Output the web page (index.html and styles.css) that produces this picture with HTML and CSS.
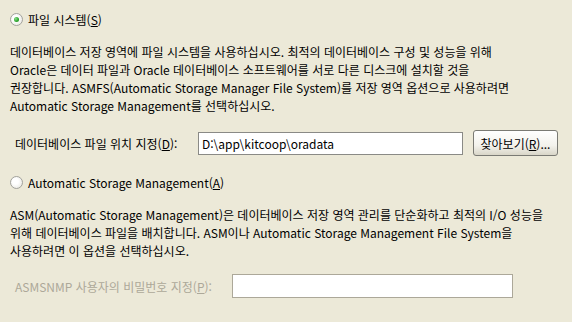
FILE: index.html
```html
<!DOCTYPE html>
<html lang="ko">
<head>
    <meta charset="UTF-8">
    <title>저장 영역 옵션</title>
    <link rel="stylesheet" href="styles.css">
</head>
<body>
    <div class="page">
        <label class="radio-row">
            <span class="radio checked"></span>
            <span>파일 시스템(<u>S</u>)</span>
        </label>

        <p class="desc desc-fs">
            데이터베이스 저장 영역에 파일 시스템을 사용하십시오. 최적의 데이터베이스 구성 및 성능을 위해<br>
            Oracle은 데이터 파일과 Oracle 데이터베이스 소프트웨어를 서로 다른 디스크에 설치할 것을<br>
            권장합니다. ASMFS(Automatic Storage Manager File System)를 저장 영역 옵션으로 사용하려면<br>
            Automatic Storage Management를 선택하십시오.
        </p>

        <div class="field-row field-location">
            <span class="field-label">데이터베이스 파일 위치 지정(<u>D</u>):</span>
            <input class="text-input" type="text" value="D:\app\kitcoop\oradata">
            <button class="btn">찾아보기(<u>R</u>)...</button>
        </div>

        <label class="radio-row radio-asm">
            <span class="radio"></span>
            <span>Automatic Storage Management(<u>A</u>)</span>
        </label>

        <p class="desc desc-asm">
            ASM(Automatic Storage Management)은 데이터베이스 저장 영역 관리를 단순화하고 최적의 I/O 성능을<br>
            위해 데이터베이스 파일을 배치합니다. ASM이나 Automatic Storage Management File System을<br>
            사용하려면 이 옵션을 선택하십시오.
        </p>

        <div class="field-row field-password disabled">
            <span class="field-label">ASMSNMP 사용자의 비밀번호 지정(<u>P</u>):</span>
            <input class="text-input" type="password" disabled>
        </div>
    </div>
</body>
</html>
```

FILE: styles.css
```css
html, body {
    margin: 0;
    padding: 0;
    background-color: #ece9d8;
}
body {
    font-family: "Noto Sans CJK KR", "Liberation Sans", sans-serif;
    font-size: 12px;
    color: #000;
}
.page {
    padding: 6px 0 0 10px;
}
.radio-row {
    display: flex;
    align-items: center;
    gap: 5px;
    height: 26px;
}
.radio {
    position: relative;
    width: 11px;
    height: 11px;
    border: 1px solid #a2a29c;
    border-radius: 50%;
    background: radial-gradient(circle at 40% 40%, #ffffff 30%, #e3e2da 100%);
}
.radio.checked::after {
    content: "";
    position: absolute;
    left: 3px;
    top: 3px;
    width: 5px;
    height: 5px;
    border-radius: 50%;
    background: radial-gradient(circle at 35% 35%, #8be08b 0%, #2aa32a 60%, #1d7d1d 100%);
}
.radio-asm {
    margin-top: 13px;
}
.desc {
    margin: 0;
    line-height: 18px;
    white-space: nowrap;
}
.desc-fs {
    margin-top: 11px;
}
.desc-asm {
    margin-top: 11px;
}
.field-row {
    display: flex;
    align-items: center;
    padding-left: 5px;
}
.field-location {
    margin-top: 15px;
    height: 26px;
}
.field-location .field-label {
    width: 183px;
}
.field-location .text-input {
    width: 265px;
    height: 23px;
}
.field-password {
    margin-top: 14px;
    height: 24px;
}
.field-password .field-label {
    width: 217px;
}
.field-password .text-input {
    width: 281px;
    height: 24px;
}
.text-input {
    box-sizing: border-box;
    margin: 0;
    padding: 0 3px;
    border: 1px solid #8a8a86;
    background: #fff;
    font-family: inherit;
    font-size: 12px;
    color: #000;
    outline: none;
}
.disabled .field-label {
    color: #aca899;
}
.disabled .text-input {
    border-color: #aca899;
}
.btn {
    box-sizing: border-box;
    margin-left: 10px;
    width: 85px;
    height: 26px;
    padding: 0;
    border: 1px solid #7a7a74;
    border-radius: 3px;
    background: linear-gradient(#ffffff, #f3f2ec 60%, #d9d6c8);
    font-family: inherit;
    font-size: 12px;
    color: #000;
}
```
